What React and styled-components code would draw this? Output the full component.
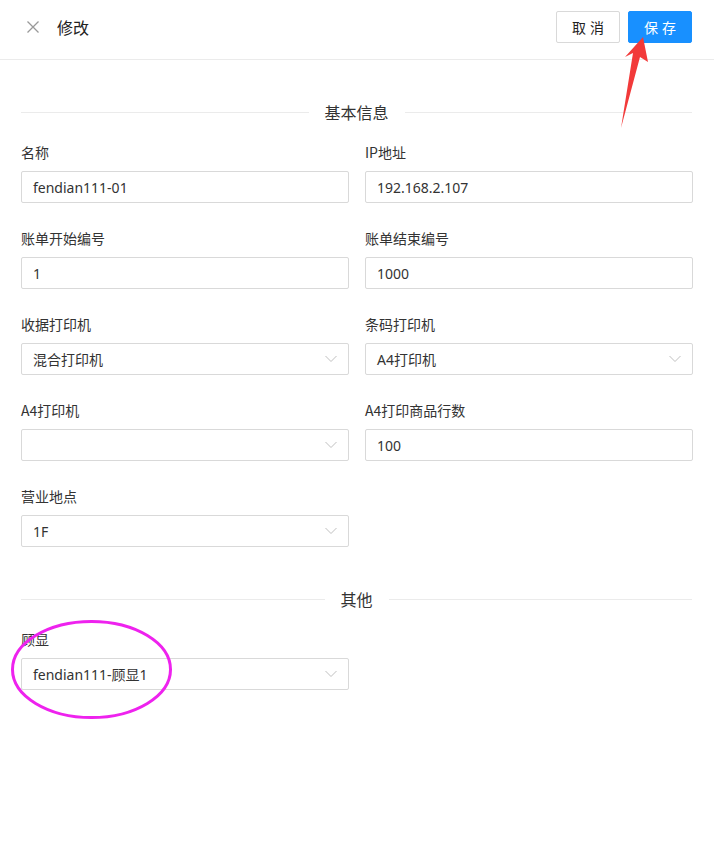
import React from "react";
import styled, { createGlobalStyle } from "styled-components";

const Global = createGlobalStyle`
  html, body { margin: 0; padding: 0; background: #fff; }
  body {
    font-family: "Noto Sans", "Noto Sans CJK SC", sans-serif;
    -webkit-font-smoothing: antialiased;
  }
  * { box-sizing: border-box; }
`;

const Page = styled.div`
  position: relative;
  width: 714px;
  min-height: 848px;
  background: #fff;
`;

const Header = styled.header`
  height: 60px;
  display: flex;
  align-items: center;
  padding: 0 22px 6px 27px;
  border-bottom: 1px solid #ebebeb;
`;

const CloseBtn = styled.button`
  width: 12px;
  height: 12px;
  padding: 0;
  border: none;
  background: none;
  display: flex;
  align-items: center;
  justify-content: center;
  margin-right: 18px;
  cursor: pointer;
`;

const Title = styled.h1`
  flex: 1;
  margin: 0;
  font-size: 16px;
  font-weight: 400;
  color: #222;
  line-height: 22px;
  font-family: "Noto Sans CJK SC", sans-serif;
`;

const Actions = styled.div`
  display: flex;
  gap: 8px;
`;

const Button = styled.button`
  width: 64px;
  height: 32px;
  border-radius: 2px;
  font-size: 14px;
  font-family: "Noto Sans CJK SC", sans-serif;
  letter-spacing: 4px;
  padding: 0 0 0 4px;
  cursor: pointer;
  border: 1px solid ${(p) => (p.$primary ? "#1890ff" : "#d9d9d9")};
  background: ${(p) => (p.$primary ? "#1890ff" : "#fff")};
  color: ${(p) => (p.$primary ? "#fff" : "#222")};
`;

const Body = styled.main`
  padding: 41px 22px 0 21px;
`;

const Divider = styled.div`
  display: flex;
  align-items: center;
  height: 22px;
  margin-bottom: ${(p) => p.$mb || 16}px;
  margin-top: ${(p) => p.$mt || 0}px;
  &::before, &::after {
    content: "";
    flex: 1;
    border-top: 1px solid #ebebeb;
  }
`;

const DividerText = styled.span`
  padding: 0 16px;
  font-size: 16px;
  line-height: 22px;
  color: #333;
  font-family: "Noto Sans CJK SC", sans-serif;
`;

const Grid = styled.div`
  display: grid;
  grid-template-columns: 328px 328px;
  column-gap: 16px;
`;

const Field = styled.div`
  margin-bottom: 24px;
`;

const Label = styled.label`
  display: block;
  font-size: 14px;
  line-height: 22px;
  padding-bottom: 8px;
  color: #333;
  font-family: "Noto Sans CJK SC", sans-serif;
`;

const Control = styled.div`
  position: relative;
  height: 32px;
  border: 1px solid #d9d9d9;
  border-radius: 2px;
  background: #fff;
  display: flex;
  align-items: center;
  padding: 0 11px;
  font-size: 14px;
  color: #333;
  font-family: "Noto Sans", "Noto Sans CJK SC", sans-serif;
`;

const Value = styled.span`
  flex: 1;
  white-space: nowrap;
`;

const Chevron = () => (
  <svg width="12" height="8" viewBox="0 0 12 8">
    <path d="M0.5 1 L6 6.5 L11.5 1" fill="none" stroke="#bfbfbf" strokeWidth="1" />
  </svg>
);

const Overlay = styled.svg`
  position: absolute;
  left: 0;
  top: 0;
  pointer-events: none;
`;

function Input({ label, value, select }) {
  return (
    <Field>
      <Label>{label}</Label>
      <Control>
        <Value>{value}</Value>
        {select && <Chevron />}
      </Control>
    </Field>
  );
}

export default function App() {
  return (
    <Page>
      <Global />
      <Header>
        <CloseBtn aria-label="close">
          <svg width="12" height="12" viewBox="0 0 12 12">
            <path d="M0.5 0.5 L11.5 11.5 M11.5 0.5 L0.5 11.5" stroke="#999" strokeWidth="1.3" />
          </svg>
        </CloseBtn>
        <Title>修改</Title>
        <Actions>
          <Button>取消</Button>
          <Button $primary>保存</Button>
        </Actions>
      </Header>
      <Body>
        <Divider $mb={18}>
          <DividerText>基本信息</DividerText>
        </Divider>
        <Grid>
          <Input label="名称" value="fendian111-01" />
          <Input label="IP地址" value="192.168.2.107" />
          <Input label="账单开始编号" value="1" />
          <Input label="账单结束编号" value="1000" />
          <Input label="收据打印机" value="混合打印机" select />
          <Input label="条码打印机" value="A4打印机" select />
          <Input label="A4打印机" value="" select />
          <Input label="A4打印商品行数" value="100" />
          <Input label="营业地点" value="1F" select />
        </Grid>
        <Divider $mt={17} $mb={18}>
          <DividerText>其他</DividerText>
        </Divider>
        <Grid>
          <Input label="顾显" value="fendian111-顾显1" select />
        </Grid>
      </Body>
      <Overlay width="714" height="848" viewBox="0 0 714 848">
        <ellipse cx="91.5" cy="669.5" rx="79" ry="48" fill="none" stroke="#ee22ee" strokeWidth="3" />
        <polygon
          points="643,37 648,62 640,57 621,128 633,53 625,57"
          fill="#f23a3a"
        />
      </Overlay>
    </Page>
  );
}
